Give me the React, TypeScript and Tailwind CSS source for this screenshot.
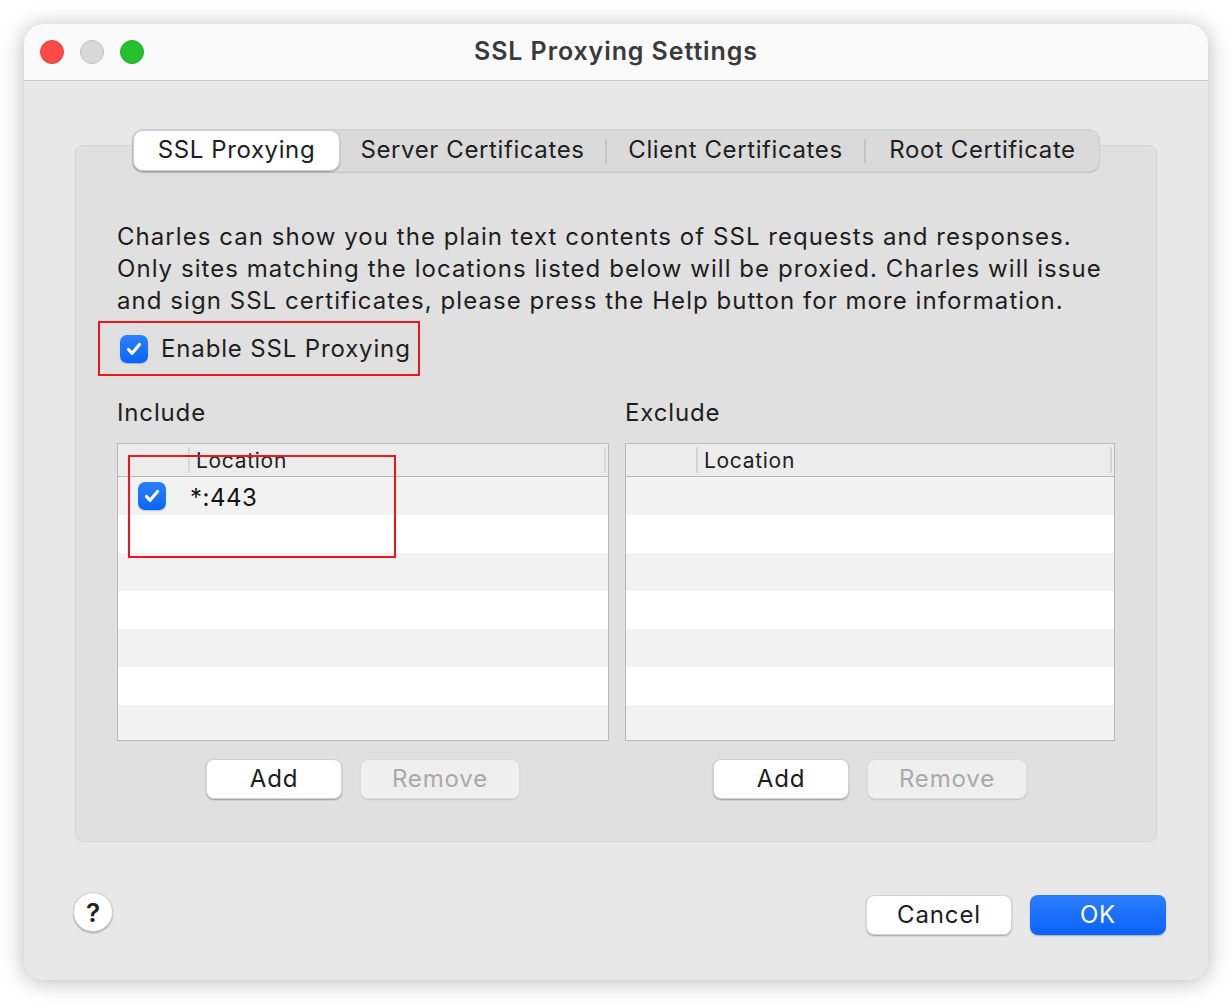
import React from "react";

const CheckBox = () => (
  <div className="w-[28px] h-[28px] rounded-[7px] bg-gradient-to-b from-[#2b80fb] to-[#0a64fa] shadow-[0_1px_1px_rgba(0,0,0,0.2)] flex items-center justify-center shrink-0">
    <svg width="20" height="20" viewBox="0 0 20 20" fill="none">
      <path d="M4.5 10.5l3.6 3.8L15.5 5.5" stroke="white" strokeWidth="3.2" strokeLinecap="round" strokeLinejoin="round" />
    </svg>
  </div>
);

const LocationTable = ({ first }: { first?: boolean }) => {
  const rows = [0, 1, 2, 3, 4, 5, 6];
  return (
    <div className="h-[298px] border border-[#b9b9b9] bg-white overflow-hidden flex flex-col">
      {/* header */}
      <div className="h-[33px] shrink-0 bg-[#ececec] border-b border-[#b9b9b9] flex items-center text-[21px] text-[#222] tracking-[0.7px]">
        <div className="w-[72px] h-[26px] border-r-2 border-[#d6d6d6]"></div>
        <div className="flex-1 pl-[6px] leading-none pt-[1px]">Location</div>
        <div className="w-[2px] h-[26px] bg-[#d6d6d6] mr-[2px]"></div>
      </div>
      {rows.map((r) => (
        <div
          key={r}
          className={`h-[38px] shrink-0 flex items-center ${r % 2 === 0 ? "bg-[#f2f2f2]" : "bg-white"}`}
        >
          {first && r === 0 && (
            <>
              <div className="w-[72px] pl-[20px] flex items-center">
                <CheckBox />
              </div>
              <span className="text-[24px] text-[#111] tracking-[0.5px] pt-[3px]">*:443</span>
            </>
          )}
        </div>
      ))}
    </div>
  );
};

const ButtonPair = () => (
  <div className="flex justify-center gap-[18px] mt-[18px]">
    <button className="w-[136px] h-[40px] rounded-[8px] bg-white border border-[#d2d2d2] shadow-[0_1px_1.5px_rgba(0,0,0,0.3)] text-[24px] text-[#1c1c1c]">
      Add
    </button>
    <button className="w-[160px] h-[40px] rounded-[8px] bg-[#efefef] border border-[#dcdcdc] shadow-[0_1px_1px_rgba(0,0,0,0.1)] text-[24px] text-[#a9a9a9]">
      Remove
    </button>
  </div>
);

const tabs = [
  { label: "SSL Proxying", w: "w-[207px]", active: true },
  { label: "Server Certificates", w: "w-[265px]" },
  { label: "Client Certificates", w: "w-[259px]" },
  { label: "Root Certificate", w: "w-[235px]" },
];

export default function App() {
  return (
    <div
      className="w-[1232px] h-[1004px] bg-white pt-[24px] px-[24px] tracking-[0.85px]"
      style={{ fontFamily: "Inter, 'Noto Sans', sans-serif" }}
    >
      <div className="h-[956px] rounded-[20px] overflow-hidden flex flex-col shadow-[0_2px_22px_rgba(0,0,0,0.28)] bg-[#e8e8e8]">
        {/* Title bar */}
        <div className="h-[57px] shrink-0 bg-[#fafafa] border-b border-[#c6c6c6] grid grid-cols-[1fr_auto_1fr] items-center px-[16px]">
          <div className="flex items-center gap-[16px]">
            <div className="w-[24px] h-[24px] rounded-full bg-[#fe4a46] border border-[#e0403c]"></div>
            <div className="w-[24px] h-[24px] rounded-full bg-[#d9d9d9] border border-[#c2c2c2]"></div>
            <div className="w-[24px] h-[24px] rounded-full bg-[#27c12f] border border-[#1fae28]"></div>
          </div>
          <div className="text-[25px] font-semibold text-[#3a3a3a] pb-[1px] tracking-[0.9px]">SSL Proxying Settings</div>
          <div></div>
        </div>

        {/* Body */}
        <div className="flex-1 flex flex-col pt-[48px] px-[51px]">
          {/* Tabs */}
          <div className="relative z-10 flex justify-center">
            <div className="flex h-[43px] rounded-[11px] bg-[#dadada] border border-[#cfcfcf] shadow-[0_1px_1px_rgba(0,0,0,0.12)]">
              {tabs.map((t, i) => (
                <div key={t.label} className={`${t.w} flex items-center`}>
                  {i > 1 && <div className="w-[2px] h-[24px] bg-[#c4c4c4]"></div>}
                  <div
                    className={`flex-1 h-full flex items-center justify-center text-[24px] text-[#1e1e1e] pb-[2px] tracking-[0.6px] ${
                      t.active
                        ? "bg-white rounded-[10px] shadow-[0_1px_2px_rgba(0,0,0,0.3)] border border-[#d0d0d0]"
                        : ""
                    }`}
                  >
                    {t.label}
                  </div>
                </div>
              ))}
            </div>
          </div>

          {/* Group box */}
          <div className="-mt-[27px] h-[697px] rounded-[8px] bg-[#e0e0e0] border border-[#d3d3d3] pt-[75px] px-[41px] text-[#1e1e1e]">
            <p className="text-[24px] leading-[32px] tracking-[1.05px]">
              Charles can show you the plain text contents of SSL requests and responses.
              <br />
              Only sites matching the locations listed below will be proxied. Charles will issue
              <br />
              and sign SSL certificates, please press the Help button for more information.
            </p>

            <div className="relative mt-[16px] h-[32px] flex items-center gap-[13px] pl-[3px]">
              <CheckBox />
              <span className="text-[24px]">Enable SSL Proxying</span>
              <div className="absolute -left-[19px] -top-[12px] w-[322px] h-[55px] border-2 border-[#f0141e]"></div>
            </div>

            <div className="mt-[32px] grid grid-cols-[492px_490px] gap-[16px]">
              <div className="flex flex-col">
                <div className="text-[24px] leading-[32px]">Include</div>
                <div className="relative mt-[14px]">
                  <LocationTable first />
                  <div className="absolute left-[11px] top-[12px] w-[268px] h-[103px] border-2 border-[#f0141e]"></div>
                </div>
                <ButtonPair />
              </div>
              <div className="flex flex-col">
                <div className="text-[24px] leading-[32px]">Exclude</div>
                <div className="mt-[14px]">
                  <LocationTable />
                </div>
                <ButtonPair />
              </div>
            </div>
          </div>

          {/* Bottom row */}
          <div className="mt-[53px] flex items-center justify-between">
            <div className="-ml-[2px] -mt-[6px] w-[40px] h-[40px] rounded-full bg-white border border-[#d0d0d0] shadow-[0_1px_1.5px_rgba(0,0,0,0.3)] flex items-center justify-center text-[26px] font-semibold text-[#222] tracking-normal">
              ?
            </div>
            <div className="flex gap-[18px] mr-[-9px]">
              <button className="w-[146px] h-[40px] rounded-[8px] bg-white border border-[#d2d2d2] shadow-[0_1px_1.5px_rgba(0,0,0,0.3)] text-[24px] text-[#1c1c1c]">
                Cancel
              </button>
              <button className="w-[136px] h-[40px] rounded-[8px] bg-gradient-to-b from-[#2a7efb] to-[#0a62fb] shadow-[0_1px_1.5px_rgba(0,0,0,0.25)] text-[24px] text-white">
                OK
              </button>
            </div>
          </div>
        </div>
      </div>
    </div>
  );
}
